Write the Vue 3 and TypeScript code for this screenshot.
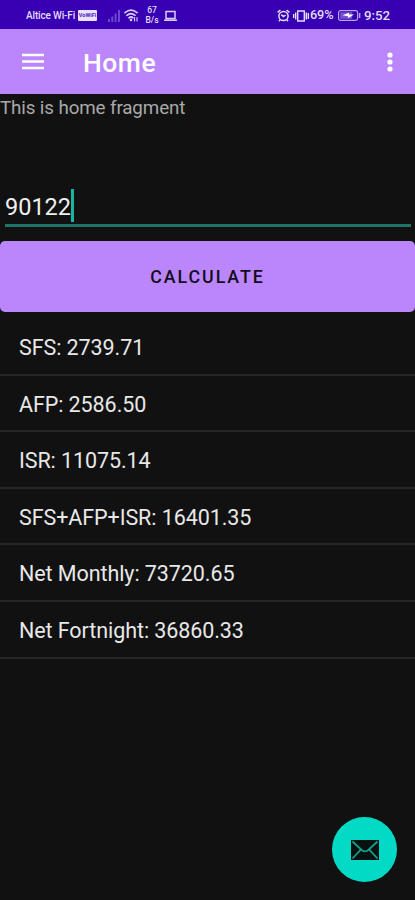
<script setup lang="ts">
interface ResultRow {
  label: string
  value: string
}

const salary = '90122'
const rows: ResultRow[] = [
  { label: 'SFS', value: '2739.71' },
  { label: 'AFP', value: '2586.50' },
  { label: 'ISR', value: '11075.14' },
  { label: 'SFS+AFP+ISR', value: '16401.35' },
  { label: 'Net Monthly', value: '73720.65' },
  { label: 'Net Fortnight', value: '36860.33' },
]
</script>

<template>
  <div class="screen">
    <header class="status">
      <span class="carrier">Altice Wi-Fi</span>
      <span class="vowifi">VoWiFi</span>
      <svg class="signal" width="12" height="12" viewBox="0 0 12 12">
        <path d="M0 9h2v3H0zM3.3 6.5h2V12h-2zM6.6 3.5h2V12h-2zM10 0h2v12h-2z" fill="#6d45cf" />
      </svg>
      <svg class="wifi" width="15" height="13" viewBox="0 0 15 13">
        <g fill="none" stroke="#d9cdf5" stroke-width="1.7" stroke-linecap="round">
          <path d="M1 3.6Q7 -1.4 13 3.6M3 6.3Q7 2.8 11 6.3M5 8.8Q7 7.2 9 8.8" />
          <path d="M10.600 8.500v3.400M13 8.500v3.400" stroke-width="1.100" />
        </g>
        <circle cx="7" cy="11" r="1.3" fill="#d9cdf5" />
      </svg>
      <span class="speed"><span>67</span><span>B/s</span></span>
      <svg class="laptop" width="13" height="12" viewBox="0 0 13 12">
        <path d="M2 1.600h9v6.800H2zM0 10.200h13" fill="none" stroke="#d9cdf5" stroke-width="1.500" />
      </svg>
      <span class="spacer"></span>
      <svg class="alarm" width="13" height="13" viewBox="0 0 13 13">
        <g fill="none" stroke="#e4dcf8" stroke-width="1.5">
          <circle cx="6.5" cy="7" r="4.6" />
          <path d="M.6 3.4L3.4 1M12.4 3.4L9.6 1M4.3 5.6L6.5 7.6L8.7 6M3.2 10.6L2 12.2M9.8 10.6L11 12.2" />
        </g>
      </svg>
      <svg class="vibrate" width="16" height="12" viewBox="0 0 16 12">
        <path d="M4.700 1h6.600v10H4.700zM2.700 2.500v7M13.300 2.500v7M.7 4v4M15.300 3v6" fill="none" stroke="#e4dcf8" stroke-width="1.400" />
      </svg>
      <span class="percent">69%</span>
      <svg class="battery" width="23" height="11" viewBox="0 0 23 11">
        <rect x=".6" y=".6" width="19" height="9.8" rx="1.8" fill="none" stroke="#b7a1ea" stroke-width="1.2" />
        <rect x="2.2" y="2.2" width="12" height="6.6" fill="#7650d2" />
        <path d="M4.5 5.2L11 2.7V4.6H16L10 8.300V6.200z" fill="#fff" />
        <path d="M21.600 3v5" stroke="#b7a1ea" stroke-width="1.500" />
      </svg>
      <span class="clock">9:52</span>
    </header>

    <nav class="appbar">
      <svg class="menu" width="22" height="17" viewBox="0 0 22 17">
        <path d="M0 2h22M0 8.500h22M0 15h22" stroke="#fff" stroke-width="2.500" />
      </svg>
      <h1>Home</h1>
      <svg class="more" width="6" height="20" viewBox="0 0 6 20">
        <g fill="#fff"><circle cx="3" cy="3" r="2.6" /><circle cx="3" cy="10" r="2.6" /><circle cx="3" cy="17" r="2.6" /></g>
      </svg>
    </nav>

    <main>
      <p class="intro">This is home fragment</p>
      <div class="field"><span>{{ salary }}</span><i class="caret"></i></div>
      <button class="calculate" type="button">CALCULATE</button>
      <ul>
        <li v-for="row in rows" :key="row.label">{{ row.label }}: {{ row.value }}</li>
      </ul>
    </main>

    <button class="fab" type="button" aria-label="Email">
      <svg width="28" height="20" viewBox="0 0 28 20">
        <path d="M0 0h28v20H0z" fill="#07110f" />
        <path d="M1.500 1.500L11 10.200Q14 12.600 17 10.200L26.500 1.500M1.500 18.500L9.800 9.600M26.500 18.500L18.200 9.600" fill="none" stroke="#159d8d" stroke-width="1.800" />
      </svg>
    </button>
  </div>
</template>

<style>
body {
  background: #111;
}
</style>

<style scoped>
.screen {
  position: relative;
  display: flex;
  flex-direction: column;
  width: 415px;
  height: 900px;
  overflow: hidden;
  background: #111;
  color: #e8e8e8;
  font-family: Roboto, sans-serif;
}
.status {
  display: flex;
  align-items: center;
  flex: none;
  box-sizing: border-box;
  height: 29px;
  padding: 2px 23px 0 26px;
  background: #3700b3;
  color: #e4dcf8;
  line-height: 1;
  white-space: nowrap;
}
.status > * {
  flex: none;
}
.status > .spacer {
  flex: 1;
}
.carrier {
  width: 52px;
  font-size: 10px;
  font-weight: 500;
  letter-spacing: -0.15px;
}
.vowifi {
  width: 19px;
  height: 11px;
  border-radius: 1px;
  background: #e9e2fa;
  color: #4b20bb;
  font-size: 5.5px;
  font-weight: 700;
  line-height: 11px;
  text-align: center;
}
.signal {
  margin-left: 11px;
}
.wifi {
  margin-left: 4px;
}
.speed {
  display: flex;
  flex-direction: column;
  align-items: center;
  width: 14px;
  margin-left: 6px;
  font-size: 8.5px;
  font-weight: 500;
  line-height: 9.5px;
}
.laptop {
  margin-left: 5px;
}
.vibrate {
  margin-left: 3px;
}
.percent {
  width: 26px;
  margin-left: 1px;
  font-size: 12.7px;
  font-weight: 500;
  letter-spacing: -0.1px;
}
.battery {
  margin-left: 2px;
}
.clock {
  width: 28px;
  margin-left: 3px;
  font-size: 13.3px;
  font-weight: 500;
}
.appbar {
  display: flex;
  align-items: center;
  flex: none;
  box-sizing: border-box;
  height: 65px;
  padding: 0 22px;
  background: #bb86fc;
  color: #fff;
}
h1 {
  flex: 1;
  margin: 3px 0 0 39px;
  font-size: 26.5px;
  font-weight: 500;
  letter-spacing: 0.5px;
  line-height: 32px;
}
.intro {
  box-sizing: border-box;
  height: 87px;
  margin: 0;
  padding-top: 3px;
  color: #a9a9a9;
  font-size: 18.8px;
  letter-spacing: -0.12px;
  line-height: 22px;
}
.field {
  display: flex;
  align-items: center;
  box-sizing: border-box;
  height: 46px;
  margin: 0 4px 0 5px;
  padding-top: 6px;
  border-bottom: 3px solid #1c7468;
  color: #f0f0f0;
  font-size: 23.5px;
}
.field span {
  position: relative;
  top: 1px;
}
.caret {
  width: 3px;
  height: 33px;
  background: #17b5a3;
}
.calculate {
  display: block;
  width: 100%;
  height: 71px;
  margin-top: 14px;
  padding: 0;
  border: 0;
  border-radius: 5px;
  background: #bb86fc;
  color: #120d18;
  font: 500 17.8px/71px Roboto, sans-serif;
  letter-spacing: 1.95px;
}
ul {
  margin: 7px 0 0;
  padding: 0;
  list-style: none;
}
li {
  box-sizing: border-box;
  height: 56.6px;
  padding: 2px 19px 0;
  border-bottom: 2px solid #262626;
  font-size: 21.5px;
  letter-spacing: -0.08px;
  line-height: 53px;
}
.fab {
  position: absolute;
  right: 18px;
  bottom: 18px;
  display: grid;
  place-items: center;
  width: 65px;
  height: 65px;
  padding: 0;
  border: 0;
  border-radius: 50%;
  background: #03dac5;
}
</style>
